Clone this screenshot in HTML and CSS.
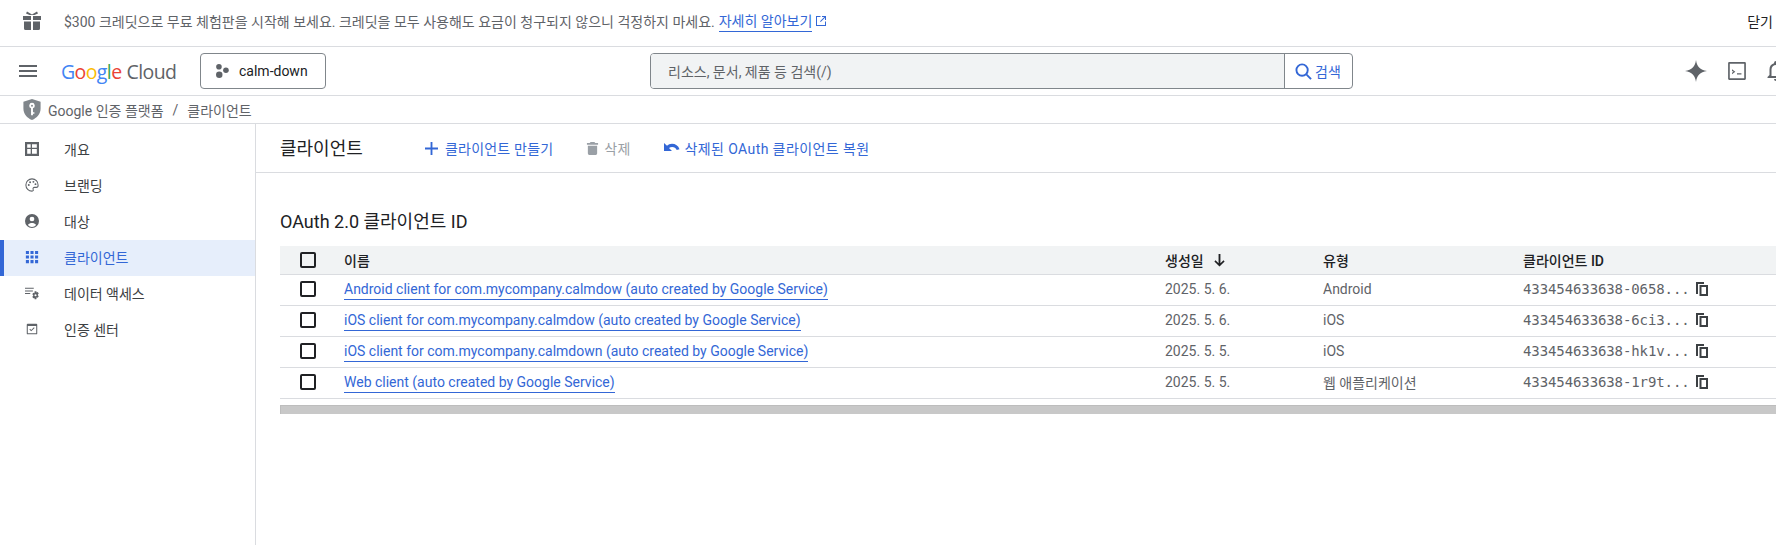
FILE: index.html
```html
<!DOCTYPE html>
<html lang="ko">
<head>
    <meta charset="UTF-8">
    <meta name="viewport" content="width=device-width, initial-scale=1.0">
    <title>클라이언트</title>
    <link rel="stylesheet" href="styles.css">
</head>
<body>

<div class="banner">
    <svg class="giftIcon" viewBox="0 0 24 24"><path d="M3 7h8v4H3zM13 7h8v4h-8zM4 12.500h7V21H5.500A1.500 1.500 0 0 1 4 19.500zM13 12.500h7v7a1.500 1.500 0 0 1-1.500 1.500H13zM7 2.500l5 3 5-3 1 2-3.500 1.500h-5L6 4.500z"/></svg>
    <span class="bannerText">$300 크레딧으로 무료 체험판을 시작해 보세요. 크레딧을 모두 사용해도 요금이 청구되지 않으니 걱정하지 마세요.</span>
    <a class="link bannerLink">자세히 알아보기</a>
    <svg class="externalIcon" viewBox="0 0 12 12"><path d="M1 1h4.500v1H2v8h8V6.500h1V11H1zM7 1h4v4h-1V2.700L5.700 7 5 6.300 9.300 2H7z"/></svg>
    <span class="closeText">닫기</span>
</div>

<header class="topbar">
    <svg class="menuIcon" viewBox="0 0 18 14"><path d="M0 1h18v2H0zM0 6h18v2H0zM0 11h18v2H0z"/></svg>
    <div class="logo">
        <span class="logoGoogle"><span class="gBlue">G</span><span class="gRed">o</span><span class="gYellow">o</span><span class="gBlue">g</span><span class="gGreen">l</span><span class="gRed">e</span></span>
        <span class="logoCloud">Cloud</span>
    </div>
    <button class="projectButton">
        <svg class="projectIcon" viewBox="0 0 12 13"><circle cx="2.700" cy="2.600" r="2.600"/><circle cx="9.200" cy="5.800" r="2.600"/><circle cx="3" cy="10" r="3"/></svg>
        calm-down
    </button>
    <div class="searchBox">
        <div class="searchInput">리소스, 문서, 제품 등 검색(/)</div>
        <div class="searchButton">
            <svg class="searchIcon" viewBox="0 0 18 18"><circle cx="7.500" cy="7.500" r="6" fill="none" stroke-width="2"/><path d="M12 12l5 5" stroke-width="2" fill="none"/></svg>
            검색
        </div>
    </div>
    <div class="topIcons">
        <svg class="sparkIcon" viewBox="0 0 24 24"><path d="M12 1c.8 6.500 4 10 11 11-7 1-10.200 4.500-11 11-.8-6.500-4-10-11-11 7-1 10.200-4.500 11-11z"/></svg>
        <svg class="termIcon" viewBox="0 0 18 18"><path fill-rule="evenodd" d="M2 1h14a1 1 0 0 1 1 1v14a1 1 0 0 1-1 1H2a1 1 0 0 1-1-1V2a1 1 0 0 1 1-1zm.500 1.500v13h13v-13zM4.500 7.500l3 2.200-3 2.200v-1.400l1.400-.8-1.400-.8zM9 11h4v1.200H9z"/></svg>
        <svg class="bellIcon" viewBox="0 0 24 24"><path fill-rule="evenodd" d="M12 2a2 2 0 0 1 2 2v.300A6.500 6.500 0 0 1 18.500 10.500V16l2 2v1h-17v-1l2-2v-5.500A6.500 6.500 0 0 1 10 4.300V4a2 2 0 0 1 2-2zm0 4a4.500 4.500 0 0 0-4.500 4.500V17h9v-6.500A4.500 4.500 0 0 0 12 6zm-2 14h4a2 2 0 0 1-4 0z"/></svg>
    </div>
</header>

<div class="breadcrumb">
    <svg class="shieldIcon" viewBox="0 0 18 22"><path fill-rule="evenodd" d="M9 0l9 3v7c0 5.500-3.800 10-9 12C3.800 20 0 15.500 0 10V3zM9 4a3 3 0 0 0-1 5.800V17h2v-1.500h1.500V14H10V9.800A3 3 0 0 0 9 4zm0 2a1 1 0 1 1 0 2 1 1 0 0 1 0-2z"/></svg>
    <span>Google 인증 플랫폼</span>
    <span class="crumbSlash">/</span>
    <span>클라이언트</span>
</div>

<div class="layout">
    <nav class="sidebar">
        <div class="navItem">
            <svg class="navIcon" viewBox="0 0 16 16"><path fill-rule="evenodd" d="M0 0h16v16H0zm2.500 2.500v4h4v-4zm5.500 0v4h5.500v-4zM2.500 8v5.500h4V8zM8 8v5.500h5.500V8z"/></svg>
            개요
        </div>
        <div class="navItem">
            <svg class="navIcon" viewBox="0 0 16 16"><path fill="none" stroke="#5f6368" stroke-width="1.200" d="M8 1a7 7 0 0 0 0 14c1.500 0 1.800-1 1.300-2-.5-1.200.2-2.300 1.500-2.300H13c1.300 0 2-1 2-2.500C15 4 12 1 8 1z"/><circle cx="4.300" cy="8" r="1.100"/><circle cx="5.800" cy="4.800" r="1.100"/><circle cx="9.600" cy="4.400" r="1.100"/><circle cx="12" cy="7" r="1.100"/></svg>
            브랜딩
        </div>
        <div class="navItem">
            <svg class="navIcon" viewBox="0 0 16 16"><path fill-rule="evenodd" d="M8 0a8 8 0 1 1 0 16A8 8 0 0 1 8 0zm0 3a2.700 2.700 0 1 0 0 5.400A2.700 2.700 0 0 0 8 3zM3.300 12.500a6 6 0 0 0 9.400 0C11.500 10.900 9.700 10.300 8 10.300s-3.500.6-4.700 2.200z"/></svg>
            대상
        </div>
        <div class="navItem navActive">
            <svg class="navIcon" viewBox="0 0 16 16"><path d="M1 1h3.500v3.500H1zM6.250 1h3.500v3.500h-3.500zM11.500 1H15v3.500h-3.500zM1 6.250h3.500v3.500H1zM6.250 6.250h3.500v3.500h-3.500zM11.500 6.250H15v3.500h-3.500zM1 11.500h3.500V15H1zM6.250 11.500h3.500V15h-3.500zM11.500 11.500H15V15h-3.500z"/></svg>
            클라이언트
        </div>
        <div class="navItem">
            <svg class="navIcon" viewBox="0 0 16 16"><path d="M0 2h10v1.200H0zM0 5h9v1.200H0zM0 8h6v1.200H0z"/><path fill-rule="evenodd" d="M11 6h2l.3 1.400 1.300-.5 1.100 1.700-1 1v1l1 1-1.100 1.700-1.300-.5L13 15h-2l-.3-1.400-1.300.5-1.100-1.700 1-1v-1l-1-1 1.100-1.700 1.300.5zm1 3.300a1.200 1.200 0 1 0 0 2.400 1.200 1.200 0 0 0 0-2.400z"/></svg>
            데이터 액세스
        </div>
        <div class="navItem">
            <svg class="navIcon" viewBox="0 0 16 16"><path fill-rule="evenodd" d="M3 2h10a1 1 0 0 1 1 1v10a1 1 0 0 1-1 1H3a1 1 0 0 1-1-1V3a1 1 0 0 1 1-1zm.200 2.500v8.300h9.600V4.500zM5 8.500l.8-.8 1.300 1.300 3.100-3 .8.800-3.900 3.800z"/></svg>
            인증 센터
        </div>
    </nav>

    <main class="content">
        <div class="toolbar">
            <h1 class="pageTitle">클라이언트</h1>
            <div class="toolButton toolCreate">
                <svg class="toolIcon" viewBox="0 0 14 14"><path d="M6 0h2v6h6v2H8v6H6V8H0V6h6z"/></svg>
                클라이언트 만들기
            </div>
            <div class="toolButton toolDelete">
                <svg class="toolIcon" viewBox="0 0 14 14"><path d="M2 4h10v8.500a1.500 1.500 0 0 1-1.500 1.500h-7A1.500 1.500 0 0 1 2 12.500zM5 0h4l1 1h3v2H1V1h3z"/></svg>
                삭제
            </div>
            <div class="toolButton toolRestore">
                <svg class="undoIcon" viewBox="0 0 16 10"><path d="M0 0v8h8L5 5c.9-.7 2-1.100 3.200-1.100 2 0 3.800 1.200 4.500 3.200l2.800-.9C14.400 2.800 11.400.800 8 .800 6 .800 4.300 1.500 3 2.800z"/></svg>
                삭제된 OAuth 클라이언트 복원
            </div>
        </div>

        <section class="clients">
            <h2 class="sectionTitle">OAuth 2.0 클라이언트 ID</h2>
            <div class="table">
                <div class="row headRow">
                    <span class="cell checkCell"><i class="checkbox"></i></span>
                    <span class="cell">이름</span>
                    <span class="cell">생성일
                        <svg class="sortIcon" viewBox="0 0 12 14"><path d="M5 0h2v10l3.300-3.300L11.500 8 6 13.500.5 8l1.200-1.300L5 10z"/></svg>
                    </span>
                    <span class="cell">유형</span>
                    <span class="cell">클라이언트 ID</span>
                </div>
                <div class="row">
                    <span class="cell checkCell"><i class="checkbox"></i></span>
                    <span class="cell"><a class="link">Android client for com.mycompany.calmdow (auto created by Google Service)</a></span>
                    <span class="cell muted">2025. 5. 6.</span>
                    <span class="cell muted">Android</span>
                    <span class="cell idCell">433454633638-0658...<svg class="copyIcon" viewBox="0 0 12 14"><path fill-rule="evenodd" d="M0 0h8v2H2v10H0zM3.500 3H12v11H3.500zm2 2v7H10V5z"/></svg></span>
                </div>
                <div class="row">
                    <span class="cell checkCell"><i class="checkbox"></i></span>
                    <span class="cell"><a class="link">iOS client for com.mycompany.calmdow (auto created by Google Service)</a></span>
                    <span class="cell muted">2025. 5. 6.</span>
                    <span class="cell muted">iOS</span>
                    <span class="cell idCell">433454633638-6ci3...<svg class="copyIcon" viewBox="0 0 12 14"><path fill-rule="evenodd" d="M0 0h8v2H2v10H0zM3.500 3H12v11H3.500zm2 2v7H10V5z"/></svg></span>
                </div>
                <div class="row">
                    <span class="cell checkCell"><i class="checkbox"></i></span>
                    <span class="cell"><a class="link">iOS client for com.mycompany.calmdown (auto created by Google Service)</a></span>
                    <span class="cell muted">2025. 5. 5.</span>
                    <span class="cell muted">iOS</span>
                    <span class="cell idCell">433454633638-hk1v...<svg class="copyIcon" viewBox="0 0 12 14"><path fill-rule="evenodd" d="M0 0h8v2H2v10H0zM3.500 3H12v11H3.500zm2 2v7H10V5z"/></svg></span>
                </div>
                <div class="row">
                    <span class="cell checkCell"><i class="checkbox"></i></span>
                    <span class="cell"><a class="link">Web client (auto created by Google Service)</a></span>
                    <span class="cell muted">2025. 5. 5.</span>
                    <span class="cell muted">웹 애플리케이션</span>
                    <span class="cell idCell">433454633638-1r9t...<svg class="copyIcon" viewBox="0 0 12 14"><path fill-rule="evenodd" d="M0 0h8v2H2v10H0zM3.500 3H12v11H3.500zm2 2v7H10V5z"/></svg></span>
                </div>
            </div>
            <div class="scrollTrack"></div>
        </section>
    </main>
</div>

</body>
</html>
```

FILE: styles.css
```css
* {
    box-sizing: border-box;
}

html, body {
    height: 100%;
}

body {
    margin: 0;
    overflow: hidden;
    background: #ffffff;
    color: #202124;
    font-family: Roboto, "Noto Sans CJK KR", sans-serif;
    font-size: 14px;
}

svg {
    flex: none;
    fill: #5f6368;
}

.link {
    color: #3367d6;
    border-bottom: 1px solid #3367d6;
    line-height: 20px;
}

.banner {
    display: flex;
    align-items: center;
    height: 47px;
    padding: 0 0 4px 20px;
    border-bottom: 1px solid #dadce0;
    color: #5f6368;
}

.giftIcon {
    width: 24px;
    height: 24px;
    margin-right: 20px;
}

.bannerLink {
    margin-left: 4px;
}

.externalIcon {
    width: 12px;
    height: 12px;
    margin-left: 3px;
    fill: #3367d6;
}

.closeText {
    margin-left: auto;
    margin-right: 3px;
    color: #202124;
}

.topbar {
    display: flex;
    align-items: center;
    height: 49px;
    padding-left: 19px;
    border-bottom: 1px solid #dadce0;
}

.menuIcon {
    width: 18px;
    height: 14px;
}

.logo {
    display: flex;
    flex: none;
    align-items: baseline;
    gap: 5px;
    width: 139px;
    margin-left: 24px;
    font-family: "Open Sans", sans-serif;
    font-size: 19.500px;
    letter-spacing: -0.6px;
}

.logoCloud {
    color: #5f6368;
}

.gBlue { color: #4285f4; }
.gRed { color: #ea4335; }
.gYellow { color: #fbbc05; }
.gGreen { color: #34a853; }

.projectButton {
    display: flex;
    flex: none;
    align-items: center;
    width: 126px;
    height: 36px;
    padding: 0 0 0 15px;
    border: 1px solid #80868b;
    border-radius: 4px;
    background: #ffffff;
    color: #202124;
    font: inherit;
}

.projectIcon {
    width: 13px;
    height: 14px;
    margin-right: 10px;
}

.searchBox {
    display: flex;
    flex: none;
    width: 703px;
    height: 36px;
    margin-left: 324px;
    border: 1px solid #80868b;
    border-radius: 4px;
}

.searchInput {
    display: flex;
    align-items: center;
    width: 634px;
    padding-left: 17px;
    border-right: 1px solid #80868b;
    border-radius: 3px 0 0 3px;
    background: #f1f3f4;
    color: #5f6368;
}

.searchButton {
    display: flex;
    align-items: center;
    padding-left: 10px;
    gap: 3px;
    color: #3367d6;
    font-weight: 400;
}

.searchIcon {
    width: 17px;
    height: 17px;
    fill: none;
    stroke: #3367d6;
}

.topIcons {
    display: flex;
    flex: none;
    align-items: center;
    margin-left: 331px;
}

.sparkIcon {
    width: 24px;
    height: 24px;
}

.termIcon {
    width: 20px;
    height: 20px;
    margin-left: 19px;
}

.bellIcon {
    width: 24px;
    height: 24px;
    margin-left: 17px;
}

.breadcrumb {
    display: flex;
    align-items: center;
    height: 28px;
    padding-left: 23px;
    border-bottom: 1px solid #dadce0;
    color: #5f6368;
}

.shieldIcon {
    width: 18px;
    height: 21px;
    margin-right: 7px;
    fill: #80868b;
}

.crumbSlash {
    margin: 0 9px;
}

.layout {
    display: flex;
    height: 421px;
}

.sidebar {
    flex: none;
    width: 256px;
    padding-top: 8px;
    border-right: 1px solid #dadce0;
}

.navItem {
    display: flex;
    align-items: center;
    height: 36px;
    padding: 0 0 3px 25px;
    color: #3c4043;
}

.navIcon {
    width: 14px;
    height: 14px;
    margin-right: 25px;
}

.navActive {
    border-left: 4px solid #3367d6;
    padding-left: 21px;
    background-color: #e6eefb;
    color: #3367d6;
}

.navActive .navIcon {
    fill: #3367d6;
}

.content {
    flex: 1;
    min-width: 0;
}

.toolbar {
    display: flex;
    align-items: center;
    height: 49px;
    padding-left: 24px;
    border-bottom: 1px solid #dadce0;
}

.pageTitle {
    width: 145px;
    margin: 0 0 2px;
    font-size: 18px;
    font-weight: 400;
}

.toolButton {
    display: flex;
    align-items: center;
    gap: 7px;
    color: #3367d6;
    letter-spacing: 0.2px;
}

.toolIcon {
    width: 13px;
    height: 13px;
    fill: #3367d6;
}

.toolDelete {
    margin-left: 33px;
    gap: 5px;
    color: #9aa0a6;
}

.toolDelete .toolIcon {
    fill: #9aa0a6;
}

.toolRestore {
    margin-left: 34px;
    gap: 4px;
    letter-spacing: 0.4px;
}

.undoIcon {
    width: 16px;
    height: 10px;
    fill: #3367d6;
}

.clients {
    padding-left: 24px;
}

.sectionTitle {
    margin: 37px 0 12px;
    font-size: 18px;
    font-weight: 400;
    line-height: 24px;
}

.table {
    width: 1520px;
}

.row {
    display: grid;
    grid-template-columns: 64px 821px 158px 200px 1fr;
    align-items: center;
    height: 31px;
    padding-bottom: 2px;
    border-bottom: 1px solid #dadce0;
}

.headRow {
    height: 29px;
    padding-bottom: 0;
    background: #f1f3f4;
    font-weight: 500;
}

.cell {
    display: flex;
    align-items: center;
    white-space: nowrap;
}

.checkCell {
    padding-left: 20px;
}

.checkbox {
    display: block;
    width: 16px;
    height: 16px;
    border: 2px solid #202124;
    border-radius: 2px;
}

.sortIcon {
    width: 13px;
    height: 13px;
    margin-left: 9px;
    fill: #202124;
}

.muted {
    color: #5f6368;
}

.idCell {
    color: #5f6368;
    font-family: "DejaVu Sans Mono", "Liberation Mono", monospace;
    font-size: 14px;
    letter-spacing: -0.1px;
}

.copyIcon {
    width: 12px;
    height: 14px;
    margin-left: 6px;
    fill: #3c4043;
}

.scrollTrack {
    height: 9px;
    margin-top: 6px;
    border: 1px solid #bdbdbd;
    border-width: 1px 0 0 1px;
    background: #c8c8c8;
}
```
